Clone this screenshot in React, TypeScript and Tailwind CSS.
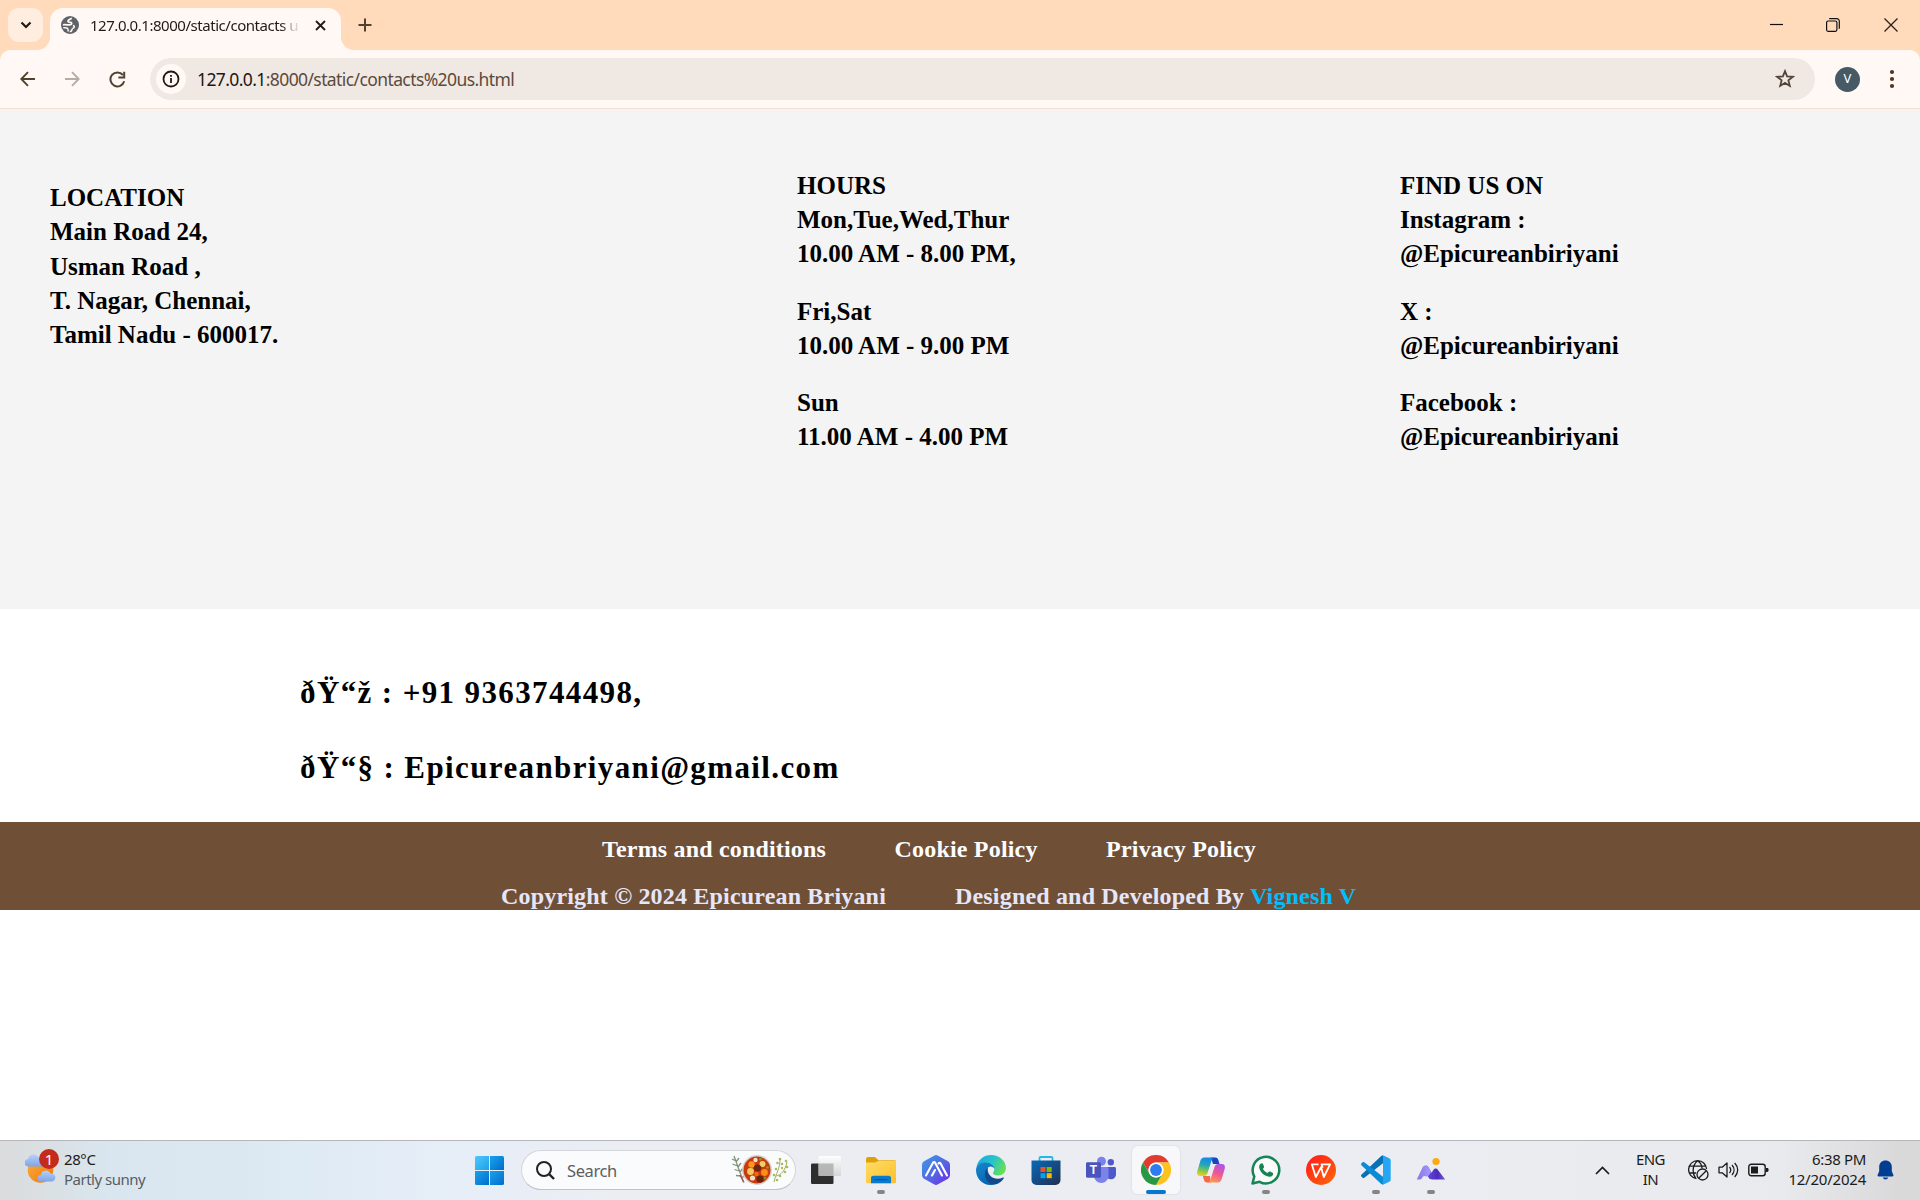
import type { ReactNode } from "react";

const locationLines = ["LOCATION", "Main Road 24,", "Usman Road ,", "T. Nagar, Chennai,", "Tamil Nadu - 600017."];

const hours = [
  ["HOURS", "Mon,Tue,Wed,Thur", "10.00 AM - 8.00 PM,"],
  ["Fri,Sat", "10.00 AM - 9.00 PM"],
  ["Sun", "11.00 AM - 4.00 PM"],
];

const social = [
  ["FIND US ON", "Instagram :", "@Epicureanbiriyani"],
  ["X :", "@Epicureanbiriyani"],
  ["Facebook :", "@Epicureanbiriyani"],
];

function TextGroups({ groups }: { groups: string[][] }) {
  return (
    <div className="flex flex-col gap-[23px] leading-[34.200px]">
      {groups.map((lines) => (
        <div key={lines[0]}>
          {lines.map((line) => (
            <p key={line}>{line}</p>
          ))}
        </div>
      ))}
    </div>
  );
}

function TabStrip() {
  return (
    <div className="flex h-[50px] bg-[#ffdbbc]">
      <div className="mt-2 ml-2 flex h-[34px] w-[35px] items-center justify-center rounded-[11px] bg-[#ffede0]">
        <svg width="12" height="8" viewBox="0 0 12 8" fill="none" stroke="#221a14" strokeWidth="2.2">
          <path d="M1.500 1.500 6 6l4.500-4.500" />
        </svg>
      </div>
      <div className="relative mt-2 ml-[7px] flex h-[42px] w-[291px] items-center rounded-t-[13px] bg-[#fff8f5] pb-2 pl-[11px]">
        <svg className="absolute bottom-0 -left-[13px]" width="13" height="13" viewBox="0 0 13 13">
          <path d="M13 0v13H0A13 13 0 0 0 13 0Z" fill="#fff8f5" />
        </svg>
        <svg className="absolute -right-[13px] bottom-0" width="13" height="13" viewBox="0 0 13 13">
          <path d="M0 0v13h13A13 13 0 0 1 0 0Z" fill="#fff8f5" />
        </svg>
        <svg width="18" height="18" viewBox="0 0 18 18">
          <circle cx="9" cy="9" r="9" fill="#5f6368" />
          <path
            d="M10.800 2.200C9.300 3 7.400 3.600 7 4.900c-.2 1.100 1 1.500 2.500 1.400 1.200 0 1.400 1.100.8 1.900-.7 1-2.200.8-3.800.6C4.800 8.600 3.300 8.400 2 8.800"
            fill="none"
            stroke="#fff8f5"
            strokeWidth="1.800"
          />
          <path
            d="M2.300 11.800c1.300-.2 3.600-.3 4.300.7.700.8.200 1.800.8 3M8.700 15.500c1.600 0 2.100-.9 2.200-1.900 0-1.300 1.800-1.200 2.300-2.400.4-.9-.3-1.400-1.300-1.700"
            fill="none"
            stroke="#fff8f5"
            strokeWidth="1.500"
          />
        </svg>
        <span className="ml-[11px] bg-linear-to-r from-[#221a14] from-92% to-[#d8d0cb] to-98% bg-clip-text text-[15px] leading-[22px] tracking-[-0.460px] whitespace-nowrap text-transparent">
          127.0.0.1:8000/static/contacts u
        </span>
        <svg className="absolute top-[12px] right-[15px]" width="11" height="11" viewBox="0 0 11 11" stroke="#221a14" strokeWidth="1.800">
          <path d="m1 1 9 9M10 1l-9 9" />
        </svg>
      </div>
      <svg className="mt-[18px] ml-[17px]" width="14" height="14" viewBox="0 0 14 14" stroke="#53412f" strokeWidth="2">
        <path d="M7 .5v13M.5 7h13" />
      </svg>
      <div className="ml-auto flex h-[49px] items-center pr-[22px]">
        <svg width="13" height="13" viewBox="0 0 13 13" stroke="#111" strokeWidth="1.200">
          <path d="M0 6.500h13" />
        </svg>
        <svg className="ml-[43px]" width="14" height="14" viewBox="0 0 14 14" fill="none" stroke="#111" strokeWidth="1.200">
          <rect x=".6" y="3" width="10.300" height="10.300" rx="1.500" />
          <path d="M3.200.7h7.600a2.500 2.500 0 0 1 2.500 2.500v7.600" />
        </svg>
        <svg className="ml-[44px]" width="14" height="14" viewBox="0 0 14 14" stroke="#2b2019" strokeWidth="1.300">
          <path d="m.5.5 13 13M13.500.5l-13 13" />
        </svg>
      </div>
    </div>
  );
}

function Toolbar() {
  return (
    <div className="bg-[#ffdbbc]">
      <div className="flex h-[59px] items-center rounded-t-[10px] border-b border-[#f5dfd0] bg-[#fff8f5] pl-[20px]">
        <svg width="16" height="16" viewBox="0 0 16 16" fill="none" stroke="#53412f" strokeWidth="1.900">
          <path d="M15 8H1.500M8 1.200 1.300 8 8 14.800" />
        </svg>
        <svg className="ml-[28px]" width="16" height="16" viewBox="0 0 16 16" fill="none" stroke="#b5aca6" strokeWidth="1.900">
          <path d="M1 8h13.500M8 1.200 14.700 8 8 14.800" />
        </svg>
        <svg className="ml-[29px]" width="17" height="17" viewBox="0 0 17 17" fill="none" stroke="#53412f" strokeWidth="2">
          <path d="M15.200 10.300A7 7 0 1 1 13.900 4" />
          <path d="M15.200.8v5.800H9.400" />
        </svg>
        <div className="ml-[24px] flex h-[42px] w-[1665px] items-center rounded-full bg-[#f0e8e3] pl-[6px]">
          <div className="flex size-[30px] items-center justify-center rounded-full bg-[#fff8f5]">
            <svg width="18" height="18" viewBox="0 0 18 18" fill="none" stroke="#221a14" strokeWidth="1.800">
              <circle cx="9" cy="9" r="7.500" />
              <path d="M9 8v5M9 5v1.800" />
            </svg>
          </div>
          <span className="ml-[11px] text-[17.500px] leading-[24px] tracking-[-0.600px] whitespace-nowrap text-[#5c4a3d]">
            <span className="text-[#1d1712]">127.0.0.1</span>:8000/static/contacts%20us.html
          </span>
          <svg className="mr-[20px] ml-auto" width="20" height="20" viewBox="0 0 20 20" fill="none" stroke="#53443b" strokeWidth="1.800">
            <path d="m10 2.200 2.100 5.200 5.700.4-4.400 3.600 1.400 5.500L10 13.900l-4.800 3 1.400-5.500-4.400-3.600 5.700-.4Z" />
          </svg>
        </div>
        <div className="ml-[20px] flex size-[25px] items-center justify-center rounded-full bg-[#455a64] text-[13px] text-white">V</div>
        <svg className="ml-[29px]" width="6" height="20" viewBox="0 0 6 20" fill="#53341f">
          <circle cx="3" cy="3" r="2.100" />
          <circle cx="3" cy="10" r="2.100" />
          <circle cx="3" cy="17" r="2.100" />
        </svg>
      </div>
    </div>
  );
}

function Page() {
  return (
    <main className="flex-1 bg-white font-['Liberation_Serif',serif] font-bold text-black">
      <section className="grid h-[500px] grid-cols-[747px_603px_1fr] bg-[#f4f4f4] pt-[60px] pl-[50px] text-[25px] leading-[34.330px]">
        <div className="pt-[12px]">
          {locationLines.map((line) => (
            <p key={line}>{line}</p>
          ))}
        </div>
        <TextGroups groups={hours} />
        <TextGroups groups={social} />
      </section>
      <section className="flex h-[213px] flex-col gap-[41px] pt-[67px] pl-[300px] text-[31px] leading-[34px] tracking-[1.380px]">
        <p>ðŸ“ž : +91 9363744498,</p>
        <p>ðŸ“§ : Epicureanbriyani@gmail.com</p>
      </section>
      <footer className="h-[88px] bg-[#6f5037] pt-[14px] text-[24px] leading-[27px] tracking-[0.180px] whitespace-nowrap">
        <div className="flex gap-[68.500px] pl-[602px] text-[#fdfdff]">
          <span>Terms and conditions</span>
          <span>Cookie Policy</span>
          <span>Privacy Policy</span>
        </div>
        <div className="mt-5 flex gap-[69px] pl-[501px] text-[#e6e6fa]">
          <span>Copyright © 2024 Epicurean Briyani</span>
          <span>
            Designed and Developed By <span className="text-[#00bfff]">Vignesh V</span>
          </span>
        </div>
      </footer>
    </main>
  );
}

function AppSlot({ children, state }: { children: ReactNode; state?: "open" | "active" }) {
  return (
    <div
      className={
        state === "active"
          ? "relative flex h-12 w-[48px] items-center justify-center rounded-md bg-[#f8f8fa] shadow-[0_0_1px_1px_#e2e3e8]"
          : "relative flex h-12 w-[48px] items-center justify-center"
      }
    >
      {children}
      {state === "open" && <span className="absolute bottom-0 h-1 w-2 rounded-full bg-[#858585]" />}
      {state === "active" && <span className="absolute bottom-0 h-1 w-5 rounded-full bg-[#0078d4]" />}
    </div>
  );
}

function Explorer() {
  return (
    <svg width="30" height="30" viewBox="0 0 30 30">
      <defs>
        <linearGradient id="folder" x1="0" y1="0" x2="1" y2="1">
          <stop stopColor="#ffdc67" />
          <stop offset="1" stopColor="#fbc02b" />
        </linearGradient>
      </defs>
      <path d="M0 4.500C0 3 .8 2 2.200 2H9l3.500 3.200H28.500c1 0 1.500.7 1.500 1.500V12H0Z" fill="#dfa00b" />
      <path d="M0 7.500h9L12.500 5.700H30V27a1.200 1.200 0 0 1-1.200 1.200H1.200A1.200 1.200 0 0 1 0 27Z" fill="url(#folder)" />
      <path d="M5 28.200V23c0-1.500 1-2.300 2.300-2.300h15.400c1.500 0 2.300 1 2.300 2.300v5.200Z" fill="#087bd0" />
      <path d="M8.500 24.600h13" stroke="#0755a2" strokeWidth="1.300" />
    </svg>
  );
}

function Hexagon() {
  return (
    <svg width="30" height="30" viewBox="0 0 30 30">
      <defs>
        <linearGradient id="hex" x1="0" y1="0" x2="1" y2="1">
          <stop stopColor="#3b9be8" />
          <stop offset=".5" stopColor="#536be3" />
          <stop offset="1" stopColor="#7026ed" />
        </linearGradient>
      </defs>
      <path d="M13 .7a4 4 0 0 1 4 0l10 5.500a4 4 0 0 1 2 3.500v10.600a4 4 0 0 1-2 3.500L17 29.300a4 4 0 0 1-4 0L3 23.800a4 4 0 0 1-2-3.500V9.700a4 4 0 0 1 2-3.500Z" fill="url(#hex)" />
      <path d="M5 20.500 12 7.700c.5-.9 1.600-.9 2.100 0L21 20.500M11 20.500l3-5.500M17.500 8.500c.6-1 1.600-1 2.100 0L26 20.500" fill="none" stroke="#fff" strokeWidth="2.100" strokeLinecap="round" strokeLinejoin="round" />
    </svg>
  );
}

function Edge() {
  return (
    <svg width="30" height="30" viewBox="0 0 30 30">
      <defs>
        <linearGradient id="edgeTop" x1="0" y1=".2" x2="1" y2=".6">
          <stop stopColor="#1ba7df" />
          <stop offset=".5" stopColor="#27c3cc" />
          <stop offset="1" stopColor="#68e24d" />
        </linearGradient>
        <linearGradient id="edgeLeft" x1="0" y1="0" x2=".5" y2="1">
          <stop stopColor="#1687cb" />
          <stop offset="1" stopColor="#0765b4" />
        </linearGradient>
      </defs>
      <path d="M.5 12C2 4.500 8 0 15 0c8.500 0 15 6 15 13 0 4.500-3.500 7.500-7.800 7.500-3.500 0-5.200-1.300-5.200-2.500 0-.8 1.300-1.500 1.300-4 0-3-3-6-7.800-6C6 8 2.200 9.500.5 12Z" fill="url(#edgeTop)" />
      <path d="M0 15C0 10 4.500 7.500 9.500 7.500c5.500 0 8.800 3.300 8.900 6.200-1-1.500-2.300-2.200-3.700-2.200-3 0-5 3.500-4.300 7.500C11.300 24 15 28 20 28.500c-2 1-3.500 1.500-5.500 1.500C6 30 0 23 0 15Z" fill="url(#edgeLeft)" />
      <path d="M12 12.500c-2.300 1.500-3.600 4.500-3 8C9.800 25.500 14 30 19 29.500c3.800-.6 7-3.200 8.800-6.300.3-.6-.2-1-.8-.7-4.300 2-9.500 1.500-12.500-1.500-2.500-2.400-3.300-5.600-2.500-8.500Z" fill="#114a8b" />
    </svg>
  );
}

function Store() {
  return (
    <svg width="30" height="30" viewBox="0 0 30 30">
      <defs>
        <linearGradient id="store" x1="0" y1="0" x2="1" y2="1">
          <stop stopColor="#0869b9" />
          <stop offset="1" stopColor="#203052" />
        </linearGradient>
      </defs>
      <path d="M8.500 7V3.200C8.500 2.500 9 2 9.700 2h10.600c.7 0 1.200.5 1.200 1.200V7" fill="none" stroke="#20b9ec" strokeWidth="1.800" />
      <path d="M.5 5.500h29V25a5 5 0 0 1-5 5h-19a5 5 0 0 1-5-5Z" fill="url(#store)" />
      <path d="M9.500 12h5v5h-5z" fill="#f25022" />
      <path d="M15.700 12h5v5h-5z" fill="#7fba00" />
      <path d="M9.500 18.200h5v5h-5z" fill="#00a4ef" />
      <path d="M15.700 18.200h5v5h-5z" fill="#ffb900" />
    </svg>
  );
}

function Teams() {
  return (
    <div className="relative size-[30px]">
      <svg width="30" height="30" viewBox="0 0 30 30">
        <circle cx="24.800" cy="7.300" r="3.200" fill="#5059c9" />
        <path d="M20 12h8.500c.8 0 1.500.7 1.500 1.500V19c0 3.200-2.200 5.300-5 5.300S20 22 20 19Z" fill="#5059c9" />
        <circle cx="15.500" cy="6.200" r="4.500" fill="#7b83eb" />
        <path d="M9 12h12c.8 0 1.500.7 1.500 1.500V20.500c0 4.300-3.300 7.500-7.200 7.500S8 24.800 8 20.500Z" fill="#7b83eb" />
        <rect y="7.300" width="15" height="15.400" rx="1.400" fill="#4b53bc" />
      </svg>
      <span className="absolute top-[7px] left-0 w-[15px] text-center font-['Liberation_Sans',sans-serif] text-[12px] leading-4 font-bold text-white">T</span>
    </div>
  );
}

function Chrome() {
  return (
    <svg width="30" height="30" viewBox="0 0 30 30">
      <path d="M2 7.500A15 15 0 0 1 28 7.500H15a7.500 7.500 0 0 0-6.500 11.250Z" fill="#e33b2e" />
      <path d="M28 7.500A15 15 0 0 1 15 30l6.500-11.250A7.500 7.500 0 0 0 15 7.500Z" fill="#fcc31e" />
      <path d="M2 7.500A15 15 0 0 0 15 30l6.500-11.250a7.500 7.500 0 0 1-13 0Z" fill="#279847" />
      <circle cx="15" cy="15" r="7.500" fill="#fff" />
      <circle cx="15" cy="15" r="5.900" fill="#2e7cf0" />
    </svg>
  );
}

function Copilot() {
  return (
    <svg width="30" height="30" viewBox="0 0 30 30">
      <defs>
        <linearGradient id="pilotL" x1=".5" y1="0" x2=".3" y2="1">
          <stop stopColor="#1686e8" />
          <stop offset=".4" stopColor="#22a8b8" />
          <stop offset=".7" stopColor="#7cc653" />
          <stop offset="1" stopColor="#f3d01f" />
        </linearGradient>
        <linearGradient id="pilotR" x1=".7" y1="0" x2=".3" y2="1">
          <stop stopColor="#ae55e6" />
          <stop offset=".5" stopColor="#ef5795" />
          <stop offset="1" stopColor="#ff9b4b" />
        </linearGradient>
      </defs>
      <path d="M15 2.500h4.500c1.600 0 2.300 1 2.800 2.500L23.500 9H17Z" fill="#1648bd" />
      <path d="M15 27.500H11c-1.800 0-2.500-1-3-2.500l-1.200-4H14Z" fill="#f4694d" />
      <path d="M8.500 2.500H18c-1.500.5-2 1.800-2.500 3.300l-4 12.200c-.7 2-1.800 3-3.700 3H4.300C1.700 21 .6 19 1.200 16.500L4.300 6C5 3.700 6 2.500 8.500 2.500Z" fill="url(#pilotL)" />
      <path d="M21.500 27.500H12c1.500-.5 2-1.800 2.500-3.300l4-12.200c.7-2 1.800-3 3.700-3h3.500c2.600 0 3.700 2 3.100 4.500L25.700 24c-.7 2.300-1.700 3.500-4.200 3.500Z" fill="url(#pilotR)" />
      <path d="m15.500 9.500 2.600-.2-3.300 10-2.800 1.200Z" fill="#f3e9ee" />
    </svg>
  );
}

function WhatsApp() {
  return (
    <svg width="30" height="30" viewBox="0 0 30 30">
      <path d="M1.500 28.500 3.300 21.500A13.300 13.300 0 1 1 8.600 26.800Z" fill="#fafbfa" stroke="#168554" strokeWidth="2.500" strokeLinejoin="round" />
      <path d="M10.700 8.200c.6-.1 1 .1 1.200.6l1.100 2.600c.2.500.1.900-.2 1.300l-.9 1c1 2 2.600 3.500 4.700 4.400l1.100-1.300c.4-.4.800-.5 1.300-.3l2.500 1.300c.5.200.7.600.6 1.200-.3 2-2 3-4 2.700-5.200-.9-9.100-4.800-9.900-9.300-.3-2 .8-3.800 2.500-4.200Z" fill="#168554" />
    </svg>
  );
}

function Wps() {
  return (
    <svg width="30" height="30" viewBox="0 0 30 30">
      <defs>
        <linearGradient id="wps" x1="0" y1="0" x2="1" y2="1">
          <stop stopColor="#ff171b" />
          <stop offset="1" stopColor="#ff6b0a" />
        </linearGradient>
      </defs>
      <circle cx="15" cy="15" r="15" fill="url(#wps)" />
      <path d="M12.500 9.300H5.800l4 12.700 5.300-9.700 2.700 9.700 6.300-12.700H15.500l1.200 3.500" fill="none" stroke="#fff" strokeWidth="1.800" strokeLinejoin="round" />
    </svg>
  );
}

function VsCode() {
  return (
    <svg width="30" height="30" viewBox="0 0 30 30">
      <path d="m22 .3 6.200 3c1 .5 1.500 1.200 1.500 2.300v18.800c0 1.100-.5 1.800-1.500 2.300l-6.200 3Z" fill="#25a5f2" />
      <path d="M22 .3v8L3.300 22.700c-.6.500-1.200.4-1.700 0L.4 21.500c-.6-.6-.6-1.300 0-1.800L20.200 1Z" fill="#0871b6" />
      <path d="M22 29.700v-8L3.300 7.300c-.6-.5-1.200-.4-1.700 0L.4 8.500c-.6.6-.6 1.300 0 1.800L20.200 29Z" fill="#0c8cd8" />
    </svg>
  );
}

function Mountain() {
  return (
    <svg width="30" height="30" viewBox="0 0 30 30">
      <defs>
        <linearGradient id="mountain" x1="0" y1="0" x2="1" y2="0">
          <stop stopColor="#8376e4" />
          <stop offset="1" stopColor="#a99aff" />
        </linearGradient>
        <linearGradient id="ridge" x1="0" y1="0" x2="1" y2="0">
          <stop stopColor="#6a4fe0" />
          <stop offset=".6" stopColor="#4a2bbd" />
          <stop offset="1" stopColor="#7a57d2" />
        </linearGradient>
      </defs>
      <circle cx="20" cy="6.500" r="3.600" fill="#fda912" />
      <path d="M10 10.400c1.300.2 2.100 1 2.700 2.100l2.800 5.300 2-3c1.200-1.600 3.300-1.600 4.500.1l7.200 9.600H16.500c-2.300 0-3.500-.6-4.400-2.700Z" fill="url(#ridge)" />
      <path d="M.8 24.500 6.500 12.500c1.200-2.400 4.600-2.600 5.800-.3L15 17.500c-1.300 1.300-2.200 3.500-3.300 3.800-1.700.5-2.400-.3-3.400-.3-1.700 0-2.200 3.500-4.200 3.500Z" fill="url(#mountain)" />
    </svg>
  );
}

function StewArt() {
  const pieces = [
    [10, 10, 3.2, "#ff951c"],
    [21, 9.500, 3, "#f4cc68"],
    [9, 17, 3.4, "#f6c95f"],
    [16, 13.500, 3.6, "#6b2710"],
    [23, 18, 3.4, "#ff8c17"],
    [18.500, 24.500, 3.6, "#652311"],
    [11, 23.500, 2.600, "#f0dfc2"],
    [14, 5.500, 2.200, "#f0e2d0"],
    [19, 4.800, 1.300, "#6fa51e"],
    [26, 13, 1.300, "#74ad20"],
    [15, 19.500, 2.200, "#ee6a14"],
    [23.500, 23.500, 1.300, "#6fa51e"],
  ] as const;
  return (
    <svg width="58" height="32" viewBox="0 0 58 32">
      <g stroke="#83917a" strokeWidth="1.300" fill="none">
        <path d="m3 2 9.500 26M5 7 1 5M5 8l3-4M6.500 12l-5-2M7 13l3-4M8.500 17l-5-1.500M9 18l3-4M10 22l-5-.5M11 24l3-3" />
      </g>
      <path d="m9 21 4 7.500" stroke="#a35b53" strokeWidth="1.500" />
      <g transform="translate(10.500 .5)">
        <circle cx="15.500" cy="15.500" r="15" fill="#d6d1cd" />
        <circle cx="15.500" cy="15.500" r="13.500" fill="#c8390c" />
        {pieces.map(([x, y, r, fill]) => (
          <circle key={`${x}-${y}`} cx={x} cy={y} r={r} fill={fill} />
        ))}
      </g>
      <path d="M43 28c2-9 6-13 6-23M45 22c5-1 9-5 11-14" fill="none" stroke="#a3ad5c" strokeWidth="1" />
      <g fill="#9ab040" fillOpacity=".85">
        <circle cx="49" cy="5" r="1.300" />
        <circle cx="46.500" cy="9" r="1.300" />
        <circle cx="51" cy="10" r="1.300" />
        <circle cx="45" cy="15" r="1.300" />
        <circle cx="55" cy="7" r="1.300" />
        <circle cx="56" cy="13" r="1.300" />
        <circle cx="51" cy="14" r="1.200" />
        <circle cx="54" cy="18" r="1.300" />
        <circle cx="49" cy="22" r="1.300" />
        <circle cx="43" cy="21" r="1.300" />
        <circle cx="46" cy="26" r="1.300" />
      </g>
    </svg>
  );
}

function Weather() {
  return (
    <div className="relative h-[36px] w-[35px]">
      <svg width="35" height="36" viewBox="0 0 35 36">
        <defs>
          <linearGradient id="sun" x1="0" y1="0" x2="1" y2="1">
            <stop stopColor="#fbb13b" />
            <stop offset="1" stopColor="#ee7410" />
          </linearGradient>
          <linearGradient id="cloud" x1="0" y1="0" x2="0" y2="1">
            <stop stopColor="#b5d0f8" />
            <stop offset="1" stopColor="#7fa5e9" />
          </linearGradient>
        </defs>
        <circle cx="15.500" cy="21" r="12.800" fill="url(#sun)" />
        <path d="M3.500 17.500a3.700 3.700 0 0 1-.3-7.400A5.500 5.500 0 0 1 13.500 8.500a4.600 4.600 0 0 1 4 9Z" fill="url(#cloud)" />
        <path d="M16 32.500a3.300 3.300 0 0 1-.2-6.600 5 5 0 0 1 9.500-1.400 4 4 0 0 1 2 8Z" fill="url(#cloud)" />
      </svg>
      <span className="absolute top-0 left-[14px] flex size-5 items-center justify-center rounded-full bg-[#c42b1c] text-[15px] leading-5 text-white">1</span>
    </div>
  );
}

function Taskbar() {
  return (
    <div className="flex h-[60px] items-center border-t border-[#b4b6ba] bg-[linear-gradient(90deg,#dadcdd_0px,#dadfe2_40px,#d9e6ef_110px,#dbe8f2_240px,#e6eef8_440px,#ebedf2_620px,#ecedf2_1400px,#e9eaed_1780px,#d9d9da_1900px)] pb-px font-['Noto_Sans',sans-serif] text-[15px] text-[#1b1b1b]">
      <div className="flex h-full w-[475px] items-center pl-[25px]">
        <div className="-mt-[7px]">
          <Weather />
        </div>
        <div className="-mt-[3px] ml-1 leading-5">
          <p className="tracking-[-0.400px]">28°C</p>
          <p className="tracking-[-0.500px] text-[#565d63]">Partly sunny</p>
        </div>
      </div>
      <svg width="29" height="29" viewBox="0 0 29 29">
        <defs>
          <linearGradient id="win" x1="0" y1="0" x2="1" y2="1">
            <stop stopColor="#4cc9fb" />
            <stop offset="1" stopColor="#1f9fe8" />
          </linearGradient>
          <linearGradient id="winLow" x1="0" y1="0" x2="1" y2="1">
            <stop stopColor="#1ba1ea" />
            <stop offset="1" stopColor="#006dcc" />
          </linearGradient>
        </defs>
        <path d="M1.500 0H14v14H0V1.500A1.500 1.500 0 0 1 1.500 0Z" fill="url(#win)" />
        <path d="M15 0h12.500A1.500 1.500 0 0 1 29 1.500V14H15Z" fill="url(#winLow)" />
        <path d="M0 15h14v14H1.500A1.500 1.500 0 0 1 0 27.500Z" fill="url(#winLow)" />
        <path d="M15 15h14v12.500a1.500 1.500 0 0 1-1.500 1.500H15Z" fill="url(#winLow)" />
      </svg>
      <div className="ml-[17px] flex h-10 w-[275px] items-center rounded-full border border-[#d3d5db] border-b-[#bfc2c8] bg-[#fafbfc] pl-[14px]">
        <svg width="19" height="19" viewBox="0 0 19 19" fill="none" stroke="#222" strokeWidth="2">
          <circle cx="8" cy="8" r="7" />
          <path d="m13 13 5 5" strokeWidth="2.400" />
        </svg>
        <span className="mt-[3px] ml-3 text-[16.500px] tracking-[-0.400px] text-[#5d5e61]">Search</span>
        <div className="mr-[6px] ml-auto">
          <StewArt />
        </div>
      </div>
      <div className="ml-[6px] flex gap-[7px]">
        <AppSlot>
          <svg width="30" height="28" viewBox="0 0 30 28">
            <defs>
              <linearGradient id="pane" x1="0" y1="0" x2="0" y2="1">
                <stop stopColor="#fff" />
                <stop offset="1" stopColor="#d4d4d4" />
              </linearGradient>
            </defs>
            <rect y="7.500" width="22.500" height="20.500" rx="1.200" fill="#2d2e2d" />
            <rect x="7.500" width="22.500" height="20" rx="1" fill="url(#pane)" fillOpacity=".95" />
            <path d="M7.500 7.500h15V20h-15Z" fill="#aaa" fillOpacity=".75" />
          </svg>
        </AppSlot>
        <AppSlot state="open"><Explorer /></AppSlot>
        <AppSlot><Hexagon /></AppSlot>
        <AppSlot><Edge /></AppSlot>
        <AppSlot><Store /></AppSlot>
        <AppSlot><Teams /></AppSlot>
        <AppSlot state="active"><Chrome /></AppSlot>
        <AppSlot><Copilot /></AppSlot>
        <AppSlot state="open"><WhatsApp /></AppSlot>
        <AppSlot><Wps /></AppSlot>
        <AppSlot state="open"><VsCode /></AppSlot>
        <AppSlot state="open"><Mountain /></AppSlot>
      </div>
      <div className="ml-auto flex items-center pr-[26px]">
        <svg width="15" height="9" viewBox="0 0 15 9" fill="none" stroke="#1b1b1b" strokeWidth="1.700">
          <path d="m1 8 6.500-6.500L14 8" />
        </svg>
        <div className="-mt-[2px] ml-[23px] w-[34px] text-center leading-5 tracking-[-0.600px]">
          <p>ENG</p>
          <p>IN</p>
        </div>
        <svg className="ml-[21px]" width="21" height="21" viewBox="0 0 21 21" fill="none" stroke="#1b1b1b" strokeWidth="1.300">
          <path d="M8.500 18.600A9 9 0 1 1 18.600 9M9.600.8C3.500 6 4.500 14 7.500 18M9.600.8c3 2 4.300 4.700 4.500 7.600M1.500 6.200h16.200M1.500 13H8" />
          <circle cx="14.500" cy="14.500" r="5.500" />
          <path d="m10.700 18.300 7.600-7.600" />
        </svg>
        <svg className="ml-[9px]" width="21" height="18" viewBox="0 0 21 18" fill="none" stroke="#1b1b1b" strokeWidth="1.300">
          <path d="M1 6.200h3.200L9 2v14l-4.800-4.200H1Z" strokeLinejoin="round" />
          <path d="M11.500 6c1.500 1.800 1.500 4.200 0 6M14 4c2.700 3 2.700 7 0 10M16.700 2c4 4.200 4 9.800 0 14" />
        </svg>
        <svg className="ml-[9px]" width="21" height="14" viewBox="0 0 21 14" fill="none" stroke="#1b1b1b" strokeWidth="1.400">
          <rect x=".8" y="1.300" width="16.400" height="11.400" rx="2.500" />
          <rect x="3" y="3.500" width="7" height="7" fill="#1b1b1b" stroke="none" />
          <path d="M18 5h1.200c.8 0 1.300.5 1.300 1.200v1.600c0 .7-.5 1.200-1.300 1.200H18Z" fill="#1b1b1b" stroke="none" />
        </svg>
        <div className="-mt-[3px] ml-[19px] text-right leading-5 whitespace-nowrap">
          <p className="tracking-[-0.350px]">6:38 PM</p>
          <p className="tracking-[-0.220px]">12/20/2024</p>
        </div>
        <svg className="ml-[11px]" width="17" height="20" viewBox="0 0 17 20" fill="#003e92">
          <path d="M8.500.5c-3.700 0-6.300 2.700-6.300 6.300v4.500L.7 14.800c-.4 1 0 1.700 1 1.700h13.600c1 0 1.400-.7 1-1.700l-1.500-3.500V6.800C14.800 3.200 12.200.5 8.500.5Z" />
          <path d="M5.700 17.500h5.600c-.5 1.300-1.500 2-2.800 2s-2.300-.7-2.800-2Z" />
        </svg>
      </div>
    </div>
  );
}

export default function App() {
  return (
    <div className="flex h-[1200px] w-[1920px] flex-col overflow-hidden bg-white font-['Noto_Sans',sans-serif]">
      <TabStrip />
      <Toolbar />
      <Page />
      <Taskbar />
    </div>
  );
}
